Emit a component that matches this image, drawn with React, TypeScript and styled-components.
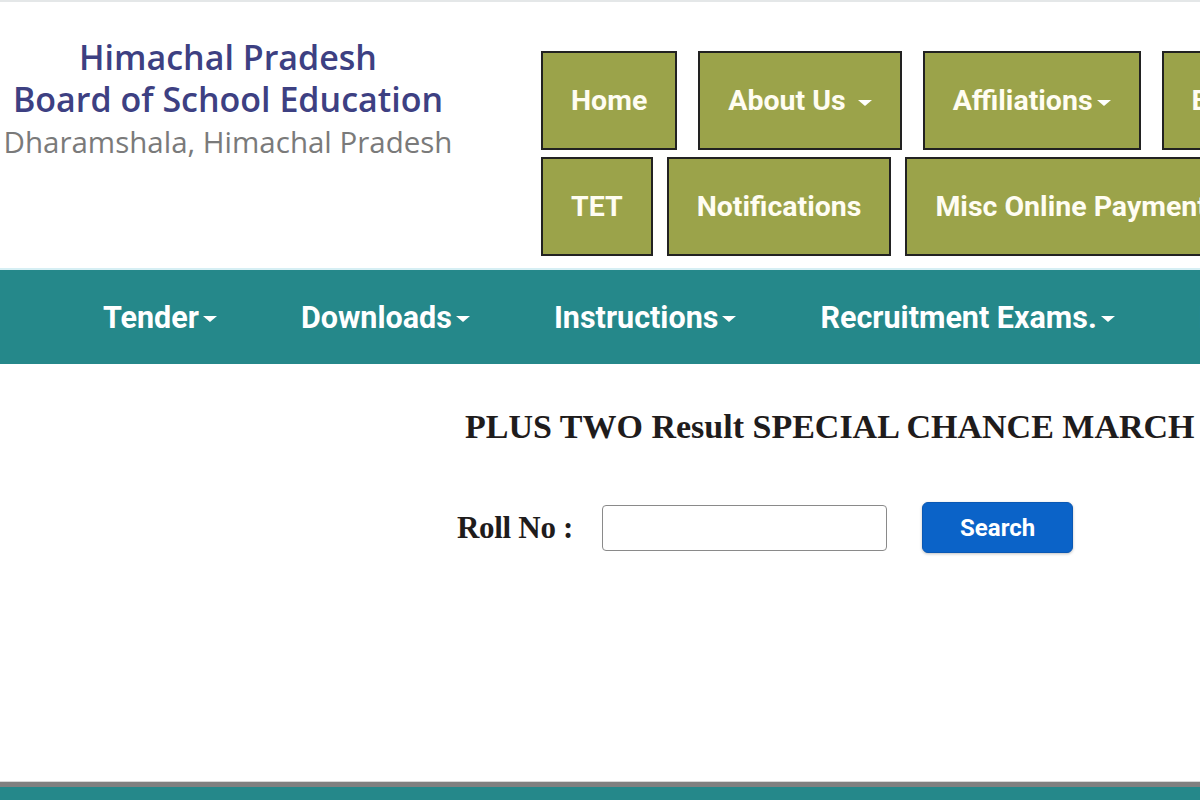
import React from 'react'
import styled, { createGlobalStyle } from 'styled-components'

const GlobalStyle = createGlobalStyle`
  html, body {
    margin: 0;
    padding: 0;
    overflow: hidden;
    background: #ffffff;
  }
  * {
    box-sizing: border-box;
  }
`

const Page = styled.div`
  display: flex;
  flex-direction: column;
  width: 1700px;
  height: 100vh;
  border-top: 2px solid #e4e7e8;
`

const Header = styled.header`
  display: flex;
  align-items: flex-start;
  height: 268px;
  border-bottom: 2px solid #d6eff4;
`

const Brand = styled.div`
  width: 456px;
  padding-top: 34px;
  text-align: center;
  font-family: 'Open Sans', 'Liberation Sans', sans-serif;
`

const BrandTitle = styled.div`
  font-size: 34px;
  font-weight: 600;
  line-height: 42px;
  color: #3d4082;
`

const BrandPlace = styled.div`
  margin-top: 1px;
  font-size: 29.5px;
  font-weight: 500;
  line-height: 42px;
  color: #7a7a7a;
`

const Menu = styled.div`
  display: flex;
  flex-direction: column;
  gap: 7px;
  margin-left: 85px;
  padding-top: 49px;
`

const MenuRow = styled.div<{ $gap: number }>`
  display: flex;
  gap: ${p => p.$gap}px;
`

const MenuButton = styled.a`
  display: flex;
  align-items: center;
  height: 99px;
  padding: 0 28px;
  background: #9ba34a;
  border: 2px solid #222222;
  font-family: Roboto, 'Liberation Sans', sans-serif;
  font-size: 28.5px;
  font-weight: 700;
  color: #fffdf2;
  white-space: nowrap;
  cursor: pointer;
`

const Caret = styled.span<{ $space?: boolean }>`
  display: inline-block;
  width: 0;
  height: 0;
  margin-left: ${p => (p.$space ? 12 : 4)}px;
  margin-top: 4px;
  border-top: 6px solid #ffffff;
  border-left: 7px solid transparent;
  border-right: 7px solid transparent;
`

const NavBar = styled.nav`
  display: flex;
  align-items: center;
  height: 94px;
  padding-left: 61px;
  background: #25888a;
`

const NavItem = styled.a`
  display: flex;
  align-items: center;
  padding: 0 42px;
  font-family: Roboto, 'Liberation Sans', sans-serif;
  font-size: 30.5px;
  font-weight: 700;
  color: #ffffff;
  white-space: nowrap;
  cursor: pointer;
`

const Main = styled.main`
  flex: 1;
  padding: 44px 0 0 465px;
  font-family: 'Liberation Serif', 'Times New Roman', serif;
  color: #1f1c1c;
`

const ResultTitle = styled.h2`
  margin: 0;
  font-size: 34px;
  font-weight: 700;
  line-height: 38px;
  white-space: nowrap;
`

const SearchForm = styled.form`
  display: flex;
  align-items: center;
  margin: 56px 0 0 -8px;
`

const Label = styled.label`
  font-size: 31px;
  font-weight: 700;
  letter-spacing: -0.3px;
  margin-right: 29px;
`

const RollInput = styled.input`
  width: 285px;
  height: 46px;
  border: 1.5px solid #8a8a8a;
  border-radius: 4px;
  background: #ffffff;
  font-size: 20px;
  padding: 0 10px;
`

const SearchButton = styled.button`
  width: 151px;
  height: 51px;
  margin-left: 35px;
  border: 1px solid #0a58b4;
  border-radius: 6px;
  background: #0b63c8;
  box-shadow: 0 1px 3px rgba(0, 0, 0, 0.25);
  font-family: Roboto, 'Liberation Sans', sans-serif;
  font-size: 24px;
  font-weight: 700;
  color: #ffffff;
  cursor: pointer;
`

const Footer = styled.footer`
  height: 19px;
  border-top: 1px solid #d8d8d8;
  box-shadow: inset 0 5px 0 #808080;
  background: #25888a;
`

const topRow = [
  { label: 'Home' },
  { label: 'About Us', caret: true, space: true },
  { label: 'Affiliations', caret: true },
  { label: 'Examinations', caret: true },
]

const bottomRow = [
  { label: 'TET' },
  { label: 'Notifications' },
  { label: 'Misc Online Payments' },
]

const navItems = ['Tender', 'Downloads', 'Instructions', 'Recruitment Exams.', 'Results']

export default function App() {
  return (
    <>
      <GlobalStyle />
      <Page>
        <Header>
          <Brand>
            <BrandTitle>
              Himachal Pradesh
              <br />
              Board of School Education
            </BrandTitle>
            <BrandPlace>Dharamshala, Himachal Pradesh</BrandPlace>
          </Brand>
          <Menu>
            <MenuRow $gap={21}>
              {topRow.map(item => (
                <MenuButton key={item.label}>
                  {item.label}
                  {item.caret && <Caret $space={item.space} />}
                </MenuButton>
              ))}
            </MenuRow>
            <MenuRow $gap={14}>
              {bottomRow.map(item => (
                <MenuButton key={item.label}>{item.label}</MenuButton>
              ))}
            </MenuRow>
          </Menu>
        </Header>
        <NavBar>
          {navItems.map(item => (
            <NavItem key={item}>
              {item}
              <Caret />
            </NavItem>
          ))}
        </NavBar>
        <Main>
          <ResultTitle>PLUS TWO Result SPECIAL CHANCE MARCH</ResultTitle>
          <SearchForm onSubmit={e => e.preventDefault()}>
            <Label htmlFor="roll">Roll No :</Label>
            <RollInput id="roll" type="text" />
            <SearchButton type="submit">Search</SearchButton>
          </SearchForm>
        </Main>
        <Footer />
      </Page>
    </>
  )
}
